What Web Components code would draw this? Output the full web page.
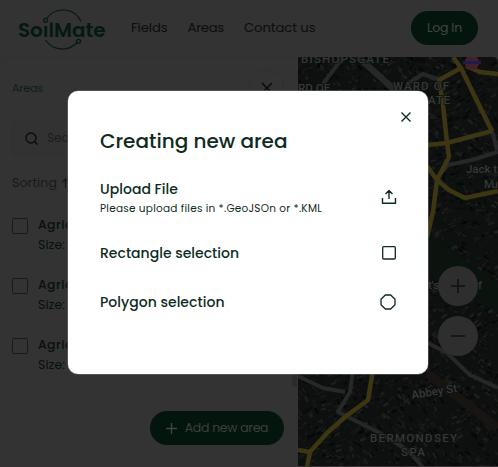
<!DOCTYPE html>
<html lang="en"><head><meta charset="utf-8"><title>SoilMate</title>
<style>html,body{margin:0;width:498px;height:467px;overflow:hidden;background:#333}body{font-family:Poppins,Inter,"Open Sans",sans-serif;color:#06100c}</style></head>
<body><soil-app></soil-app>
<script>
const define=(name,html,after)=>customElements.define(name,class extends HTMLElement{
  connectedCallback(){ if(this.shadowRoot)return; this.attachShadow({mode:'open'}).innerHTML=html; if(after)after(this,this.shadowRoot); }
});

// Single line of text spread evenly over the width given in "w".
define('fit-text','<style>:host{display:block;white-space:nowrap;flex:none}span{display:inline-block}</style><span><slot></slot></span>',(el,root)=>{
  const w=parseFloat(el.getAttribute('w')),s=root.querySelector('span');
  const n=el.textContent.length;
  s.style.letterSpacing=((w-s.getBoundingClientRect().width)/n)+'px';
  el.style.width=w+'px';
});

define('soil-logo',`<style>:host{display:block;width:88px;height:46px;flex:none}svg{display:block}text{font:600 24px Poppins,Inter,sans-serif}</style>
<svg width="88" height="46" viewBox="18 5 88 46"><g fill="none" stroke="#04190f" stroke-width="1.1"><path d="M46.500 17.500A20 20 0 0 1 81 20.500M45.500 39A20 20 0 0 0 76.500 42"/><circle cx="45.500" cy="19.300" r="1.900" stroke-width="1.300"/><circle cx="78.500" cy="40.300" r="2" stroke-width="1.300"/></g>
<text x="18" y="36" textLength="87.500" lengthAdjust="spacingAndGlyphs" fill="#04190f" style="font-size:19.500px">So\u0131lMate</text></svg>`);

define('pill-button',`<style>:host{display:flex;align-items:center;justify-content:center;gap:8px;box-sizing:border-box;height:34px;border-radius:17px;background:#04150d;color:#3b403d;font-size:12.500px;line-height:18px;flex:none}</style><slot></slot>`);

define('top-bar',`<style>:host{display:flex;align-items:center;height:57px;box-sizing:border-box;padding:0 20px 0 18px;background:#333;font-size:13.200px;line-height:20px}nav{display:flex;gap:20px;margin-left:25px;padding-bottom:2px;flex:1}pill-button{width:67px;margin-bottom:1px}fit-text{color:#0a0e0c}pill-button fit-text{color:#424644}</style>
<soil-logo></soil-logo><nav><fit-text w="36.500">Fields</fit-text><fit-text w="36.500">Areas</fit-text><fit-text w="71.500">Contact us</fit-text></nav><pill-button><fit-text w="35">Log In</fit-text></pill-button>`);

define('area-row',`<style>:host{display:flex;gap:10px;height:60px}i{box-sizing:border-box;width:16px;height:16px;border:1px solid #181b19;border-radius:2px;margin-top:3px;flex:none}div{font-size:12.500px;line-height:20px}span{color:#0a0e0c}</style>
<i></i><div><fit-text w="74" style="font-weight:500;color:#07100c">Agriculture</fit-text><fit-text w="27">Size:</fit-text></div>`);

define('side-panel',`<style>:host{display:flex;flex-direction:column;box-sizing:border-box;width:298px;height:410px;padding:20px 14px 0 12px;background:#333;border-top:1px solid #303030;border-radius:7px 0 0 0;position:relative}
.head{display:flex;justify-content:space-between;height:42px;align-items:flex-start;color:#0b1f16;font-size:11px;line-height:20px}.close{box-sizing:border-box;width:35px;height:35px;border:1px solid #303030;border-radius:50%;margin:-8px 0 0 0;display:grid;place-items:center}
.search{box-sizing:border-box;height:36px;border:1px solid #303030;border-radius:4px;display:flex;align-items:center;gap:9px;padding-left:12px;font-size:12px;color:#1b1e1c;background:#323232}
.sort{margin:17px 0 0;font-size:12.500px;line-height:20px;color:#171a18;display:flex;gap:4px;height:20px}
.rows{margin-top:22px;padding-left:0;height:180px}.add{display:flex;justify-content:flex-end;margin-top:16px}pill-button{width:134px}.thumb{position:absolute;right:1px;top:68px;width:5px;height:261px;border-radius:3px;background:#2b2b2b}</style>
<div class="head"><fit-text w="31">Areas</fit-text><span class="close"><svg width="12" height="12" stroke="#080b09" stroke-width="1.500"><path d="M1 1L11 11M11 1L1 11"/></svg></span></div>
<div class="search"><svg width="13" height="13" fill="none" stroke="#080d0a" stroke-width="1.400"><circle cx="6" cy="6" r="5"/><path d="M9.500 9.500L12.500 12.500"/></svg><fit-text w="42">Search</fit-text></div>
<div class="sort"><fit-text w="45">Sorting</fit-text><svg width="9" height="20" fill="none" stroke="#151916" stroke-width="1.200"><path d="M4.500 15V6M1.500 9L4.500 6L7.500 9"/></svg></div>
<div class="rows"><area-row></area-row><area-row></area-row><area-row></area-row></div>
<div class="add"><pill-button><svg width="11" height="11" stroke="#414543" stroke-width="1.300"><path d="M5.500 0V11M0 5.500H11"/></svg><fit-text w="83.500">Add new area</fit-text></pill-button></div><div class="thumb"></div>`);

define('city-map',`<style>:host{display:block;width:200px;height:410px;position:relative;overflow:hidden;border-radius:0 5px 0 0}svg{display:block}text{font-family:Roboto,sans-serif;font-weight:500;fill:#353838;paint-order:stroke;stroke:#0d1010;stroke-width:1.500px}
.zoom{position:absolute;left:140px;top:209px;display:grid;gap:10px}.zoom span{width:40px;height:40px;border-radius:50%;background:#2e2e2e;display:grid;place-items:center}</style>
<svg width="200" height="410" viewBox="298 57 200 410"><rect x="298" y="57" width="200" height="410" fill="#0d100e"/><g id="blocks"></g>
<path d="M420 230C447 241 460 258 498 284V311C473 305 448 280 420 274Z" fill="#0a130e"/>
<path d="M427 373L498 428" stroke="#171412" stroke-width="9" fill="none"/>
<g fill="none" stroke="#262729" stroke-width="4" stroke-linejoin="round"><path d="M343 57L323 84M298 376L323 388L345 392M353 370L350 392L338 412L350 418L380 433L407 450L423 467M428 343L447 353L470 375L498 388M437 178L448 165L472 160L498 152M492 130L497 150M407 84L423 74L437 79"/><path d="M358 57L397 92" stroke-width="6.500"/></g>
<g fill="none" stroke="#3c3613" stroke-width="4.600" stroke-linejoin="round"><path d="M453 57L461 68L476 99L492 131M461 68L439 80L443 105L447 143L449 157L437 180L433 212L427 237M428 145L447 143L492 131M424 162L437 180L449 190L465 198L498 191M466 66L480 72L498 74M373 370L368 400L345 417L327 433L310 452L298 450M310 452L307 467"/></g>
<circle cx="472" cy="62.500" r="6" fill="#2c2c30" stroke="#54182a" stroke-width="2.500"/><rect x="463" y="61" width="18" height="3" fill="#201b48"/>
<g font-size="11.500"><text x="301" y="62.500" textLength="88">BISHOPSGATE</text><text x="298" y="92" textLength="32">RD OF</text><text x="393" y="90" textLength="56">WARD OF</text><text x="411" y="104" textLength="39">DGATE</text><text x="466" y="173" textLength="31">Jack t</text><text x="484" y="188" textLength="14">Mu</text><text x="428" y="289">t's</text><text x="478" y="289">f</text><text transform="translate(412 399)rotate(-9)" textLength="46">Abbey St</text><text x="370" y="442" textLength="87">BERMONDSEY</text><text x="401" y="456" textLength="24">SPA</text></g>
</svg><div class="zoom"><span><svg width="14" height="14" stroke="#111" stroke-width="1.600"><path d="M7 0V14M0 7H14"/></svg></span><span><svg width="14" height="14" stroke="#111" stroke-width="1.600"><path d="M0 7H14"/></svg></span></div>`,(el,root)=>{
  // Rooftops: small slabs, with one street angle per neighbourhood.
  let seed=71;const r=()=>(seed=(seed*16807)%2147483647)/2147483647;
  const tones=['#151715','#1b1d1c','#060706','#080a09','#131614','#1e201f','#0b1410','#171512'];
  let out='';
  for(let by=50;by<475;by+=26)for(let bx=290;bx<505;bx+=26){
    const a=[-32,28,58,-15,40][Math.floor(r()*5)];
    for(let i=0;i<34;i++){const x=bx+r()*28,y=by+r()*28,w=1+r()*6,h=.7+r()*2.2;
      out+=`<rect x="${x.toFixed(1)}" y="${y.toFixed(1)}" width="${w.toFixed(1)}" height="${h.toFixed(1)}" fill="${tones[Math.floor(r()*8)]}" transform="rotate(${a} ${bx+13} ${by+13})"/>`;}
  }
  root.getElementById('blocks').innerHTML=out;
});

define('option-row',`<style>:host{display:flex;justify-content:space-between;align-items:center;color:#0d2b1e;font-size:14px;line-height:20px;font-weight:500}</style><div><slot></slot></div><slot name="icon"></slot>`);

define('area-dialog',`<style>:host{display:block;position:absolute;left:68px;top:91px;width:360px;height:283px;box-sizing:border-box;background:#fff;border-radius:10px;padding:36px 31px 0 32px;color:#0d2b1e;box-shadow:0 0 0 .5px #777}
h2{margin:0;font-weight:500;font-size:20px;line-height:29px}.x{position:absolute;right:17px;top:21px;display:block}.list{display:flex;flex-direction:column;margin-top:23px}.small{font-size:10.500px;font-weight:400;line-height:19px}option-row+option-row{margin-top:25px}.list option-row:last-child{margin-top:29px}svg{display:block}.up{margin-bottom:3px}</style>
<svg class="x" width="10" height="10" stroke="#0d2b1e" stroke-width="1.400"><path d="M.5.5L9.500 9.500M9.500.5L.5 9.500"/></svg>
<h2><fit-text w="187.500">Creating new area</fit-text></h2>
<div class="list"><option-row><fit-text w="78">Upload File</fit-text><fit-text class="small" w="222">Please upload files in *.GeoJSOn or *.KML</fit-text><svg class="up" slot="icon" width="16" height="16" fill="none" stroke="#0d2b1e" stroke-width="1.400" stroke-linejoin="round"><path d="M1.500 9V14.300H14.500V9M8 10V1.500M4.500 5L8 1.500L11.500 5"/></svg></option-row>
<option-row><fit-text w="139">Rectangle selection</fit-text><svg slot="icon" width="16" height="16" fill="none" stroke="#0d2b1e" stroke-width="1.300"><rect x="1.700" y="1.700" width="12.600" height="12.300" rx="1"/></svg></option-row>
<option-row><fit-text w="124.500">Polygon selection</fit-text><svg slot="icon" width="17" height="16" fill="none" stroke="#0d2b1e" stroke-width="1.300" stroke-linejoin="round"><path d="M5.300 1H10.700L15 5.300V10.700L10.700 15H5.300L1 10.700V5.300Z"/></svg></option-row></div>`);

define('soil-app',`<style>:host{display:block;position:relative;width:498px;height:467px;overflow:hidden}main{display:flex}.edge{position:absolute;left:0;bottom:0;width:100%;height:1.500px;background:#363435}</style><top-bar></top-bar><main><side-panel></side-panel><city-map></city-map></main><div class="edge"></div><area-dialog></area-dialog>`);
</script></body></html>
